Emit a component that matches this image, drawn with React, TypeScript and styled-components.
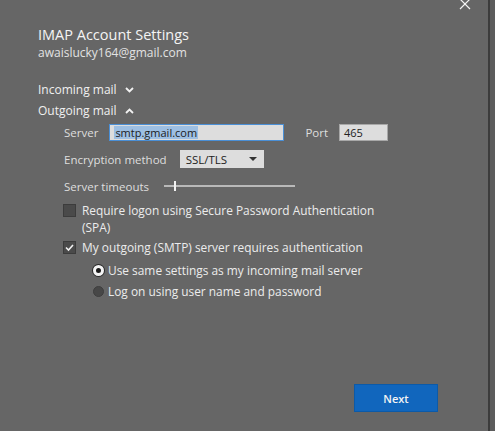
import React from "react";
import styled, { createGlobalStyle } from "styled-components";

const GlobalStyle = createGlobalStyle`
  html, body {
    margin: 0;
    padding: 0;
    background: #666666;
  }
  body {
    font-family: "Open Sans", "Noto Sans", "Liberation Sans", sans-serif;
  }
`;

const ChevronDown = () => (
  <svg width="9" height="6" viewBox="0 0 9 6">
    <path d="M1 1l3.5 3.5L8 1" fill="none" stroke="#f2f2f2" strokeWidth="1.8" />
  </svg>
);

const ChevronUp = () => (
  <svg width="9" height="6" viewBox="0 0 9 6">
    <path d="M1 5l3.5-3.5L8 5" fill="none" stroke="#f2f2f2" strokeWidth="1.8" />
  </svg>
);

const CloseIcon = () => (
  <svg width="12" height="12" viewBox="0 0 12 12">
    <path d="M1 1l10 10M11 1L1 11" stroke="#f4f4f4" strokeWidth="1.2" />
  </svg>
);

const CheckMark = () => (
  <svg width="11" height="11" viewBox="0 0 11 11">
    <path d="M2 5.5l2.5 2.5L9 3" fill="none" stroke="#f2f2f2" strokeWidth="1.6" />
  </svg>
);

export default function App() {
  return (
    <>
      <GlobalStyle />
      <Page>
        <Dialog>
          <Header>
            <TitleBlock>
              <Title>IMAP Account Settings</Title>
              <Email>awaislucky164@gmail.com</Email>
            </TitleBlock>
            <CloseButton>
              <CloseIcon />
            </CloseButton>
          </Header>

          <Section>
            <SectionToggle>
              Incoming mail <ChevronDown />
            </SectionToggle>
            <SectionToggle>
              Outgoing mail <ChevronUp />
            </SectionToggle>
          </Section>

          <Fields>
            <FieldRow>
              <Label>Server</Label>
              <TextBox width={175} focused>
                <Selected>smtp.gmail.com</Selected>
              </TextBox>
              <Label style={{ marginLeft: 10 }}>Port</Label>
              <TextBox width={49}>465</TextBox>
            </FieldRow>

            <FieldRow>
              <Label>Encryption method</Label>
              <Select>
                SSL/TLS
                <Caret />
              </Select>
            </FieldRow>

            <FieldRow>
              <Label>Server timeouts</Label>
              <Slider>
                <SliderThumb />
              </Slider>
            </FieldRow>
          </Fields>

          <Options>
            <CheckRow>
              <CheckBox />
              <OptionText>
                Require logon using Secure Password Authentication
                <br />
                (SPA)
              </OptionText>
            </CheckRow>

            <CheckRow>
              <CheckBox>
                <CheckMark />
              </CheckBox>
              <OptionText>My outgoing (SMTP) server requires authentication</OptionText>
            </CheckRow>

            <RadioGroup>
              <RadioRow>
                <Radio checked />
                <OptionText>Use same settings as my incoming mail server</OptionText>
              </RadioRow>
              <RadioRow>
                <Radio />
                <OptionText>Log on using user name and password</OptionText>
              </RadioRow>
            </RadioGroup>
          </Options>

          <Footer>
            <PrimaryButton>Next</PrimaryButton>
          </Footer>
        </Dialog>
        <EdgeShadow />
      </Page>
    </>
  );
}

const Page = styled.div`
  display: flex;
  width: 495px;
  height: 431px;
  background: #666666;
  overflow: hidden;
`;

const Dialog = styled.div`
  flex: 1;
  display: flex;
  flex-direction: column;
  padding: 0 0 0 38px;
  color: #f0f0f0;
`;

const EdgeShadow = styled.div`
  width: 7px;
  border-left: 2px solid #3c3c3c;
  background: #5c5c5c;
  box-sizing: border-box;
`;

const Header = styled.div`
  display: flex;
  justify-content: space-between;
  align-items: flex-start;
`;

const TitleBlock = styled.div`
  display: flex;
  flex-direction: column;
  padding-top: 25px;
`;

const Title = styled.div`
  font-size: 14.5px;
  line-height: 20px;
  color: #f4f4f4;
`;

const Email = styled.div`
  font-size: 12px;
  line-height: 16px;
  margin-top: 0;
  color: #e2e2e2;
`;

const CloseButton = styled.div`
  margin-top: -2px;
  margin-right: 17px;
  display: flex;
`;

const Section = styled.div`
  display: flex;
  flex-direction: column;
  gap: 5px;
  margin-top: 21px;
`;

const SectionToggle = styled.div`
  display: flex;
  align-items: center;
  gap: 8px;
  font-size: 12px;
  line-height: 16px;
  color: #f0f0f0;
`;

const Fields = styled.div`
  display: flex;
  flex-direction: column;
  padding-left: 26px;
  margin-top: 4px;
  gap: 9px;
`;

const FieldRow = styled.div`
  display: flex;
  align-items: center;
  gap: 11px;
  min-height: 18px;
`;

const Label = styled.div`
  font-size: 11.5px;
  color: #dedede;
  white-space: nowrap;
`;

const TextBox = styled.div<{ width: number; focused?: boolean }>`
  width: ${(p) => p.width}px;
  height: 17px;
  box-sizing: border-box;
  background: #dddddd;
  border: 1px solid ${(p) => (p.focused ? "#4a8fd6" : "#a8a8a8")};
  display: flex;
  align-items: center;
  padding-left: 4px;
  font-size: 11px;
  color: #222;
`;

const Selected = styled.span`
  background: #9dbfe3;
  color: #1c1c1c;
  padding: 0 1px;
  line-height: 13px;
`;

const Select = styled.div`
  width: 84px;
  height: 18px;
  margin-left: 2px;
  box-sizing: border-box;
  background: #dddddd;
  display: flex;
  align-items: center;
  justify-content: space-between;
  padding: 0 7px 0 6px;
  font-size: 11.5px;
  color: #222;
`;

const Caret = styled.span`
  width: 0;
  height: 0;
  border-left: 4px solid transparent;
  border-right: 4px solid transparent;
  border-top: 4px solid #333;
`;

const Slider = styled.div`
  position: relative;
  width: 131px;
  height: 2px;
  margin-left: 4px;
  background: #b9b9b9;
`;

const SliderThumb = styled.div`
  position: absolute;
  left: 10px;
  top: -4px;
  width: 2px;
  height: 10px;
  background: #f2f2f2;
`;

const Options = styled.div`
  display: flex;
  flex-direction: column;
  padding-left: 25px;
  margin-top: 7px;
  gap: 3px;
`;

const CheckRow = styled.div`
  display: flex;
  align-items: flex-start;
  gap: 6px;
`;

const CheckBox = styled.div`
  width: 13px;
  height: 13px;
  margin-top: 2px;
  box-sizing: border-box;
  background: #4a4a4a;
  border: 1px solid #3c3c3c;
  display: flex;
  align-items: center;
  justify-content: center;
  flex-shrink: 0;
`;

const OptionText = styled.div`
  font-size: 11.9px;
  line-height: 17px;
  color: #ececec;
`;

const RadioGroup = styled.div`
  display: flex;
  flex-direction: column;
  gap: 4px;
  padding-left: 30px;
  margin-top: 3px;
`;

const RadioRow = styled.div`
  display: flex;
  align-items: center;
  gap: 4px;
`;

const Radio = styled.div<{ checked?: boolean }>`
  width: 11px;
  height: 11px;
  box-sizing: border-box;
  border-radius: 50%;
  background: ${(p) => (p.checked ? "#1a1a1a" : "#474747")};
  border: ${(p) => (p.checked ? "3px solid #f4f4f4" : "1px solid #3e3e3e")};
  flex-shrink: 0;
  ${(p) => (p.checked ? "box-shadow: 0 0 0 1px #2a2a2a;" : "")}
`;

const Footer = styled.div`
  margin-top: auto;
  margin-bottom: 19px;
  display: flex;
  justify-content: flex-end;
  padding-right: 50px;
`;

const PrimaryButton = styled.div`
  width: 84px;
  height: 28px;
  background: #1166bd;
  border: 1px solid #0c5aa8;
  box-sizing: border-box;
  display: flex;
  align-items: center;
  justify-content: center;
  font-size: 11px;
  font-weight: 600;
  color: #f4f4f4;
`;
